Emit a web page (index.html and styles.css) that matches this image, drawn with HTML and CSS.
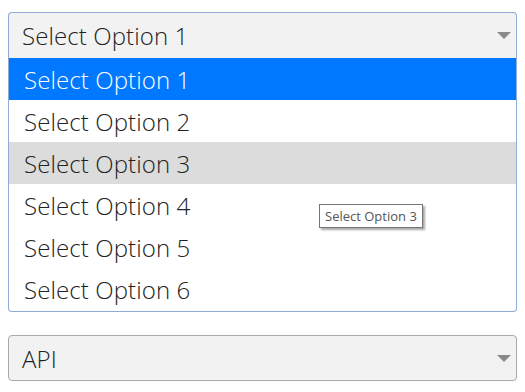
FILE: index.html
```html
<!DOCTYPE html>
<html lang="en">
<head>
  <meta charset="UTF-8">
  <meta name="viewport" content="width=device-width, initial-scale=1.0">
  <title>Select</title>
  <link rel="stylesheet" href="styles.css">
</head>
<body>
  <div class="picker open">
    <div class="select">
      <span>Select Option 1</span>
      <span class="caret"></span>
    </div>
    <ul class="options">
      <li class="selected">Select Option 1</li>
      <li>Select Option 2</li>
      <li class="hover">Select Option 3</li>
      <li>Select Option 4</li>
      <li>Select Option 5</li>
      <li>Select Option 6</li>
    </ul>
    <div class="tooltip">Select Option 3</div>
  </div>

  <div class="picker">
    <div class="select">
      <span>API</span>
      <span class="caret"></span>
    </div>
  </div>
</body>
</html>
```

FILE: styles.css
```css
body {
  margin: 0;
  padding: 12px 8px 0 8px;
  width: 509px;
  font-family: "Open Sans", "Segoe UI", sans-serif;
  font-weight: 300;
  color: #222;
  background: #fff;
}
.picker {
  position: relative;
  margin-bottom: 23px;
}
.select {
  display: flex;
  align-items: center;
  justify-content: space-between;
  height: 44px;
  padding: 0 5px 0 13px;
  font-size: 24px;
  letter-spacing: 0.1px;
  background-color: #f2f2f2;
  border: 1px solid #a9a9a9;
  border-radius: 4px;
}
.open .select {
  border-color: #8fabd8;
  border-bottom: none;
  border-radius: 4px 4px 0 0;
  height: 45px;
}
.caret {
  width: 0;
  height: 0;
  border-left: 7px solid transparent;
  border-right: 7px solid transparent;
  border-top: 7px solid #8a8a8a;
}
.options {
  list-style: none;
  margin: 0;
  padding: 0 0 1px 0;
  border: 1px solid #8fabd8;
  border-top: none;
  border-radius: 0 0 4px 4px;
  background: #fff;
}
.options li {
  height: 42px;
  line-height: 44px;
  overflow: hidden;
  padding-left: 15px;
  font-size: 24px;
  letter-spacing: 0.1px;
  color: #222;
}
.options li.selected {
  background-color: #0078ff;
  color: #fff;
}
.options li.hover {
  background-color: #dcdcdc;
}
.tooltip {
  position: absolute;
  left: 311px;
  top: 192px;
  padding: 2px 5px;
  font-size: 13px;
  font-weight: 400;
  color: #555;
  background: #fff;
  border: 1px solid #767676;
  box-shadow: 2px 2px 2px rgba(0, 0, 0, 0.35);
}
```
